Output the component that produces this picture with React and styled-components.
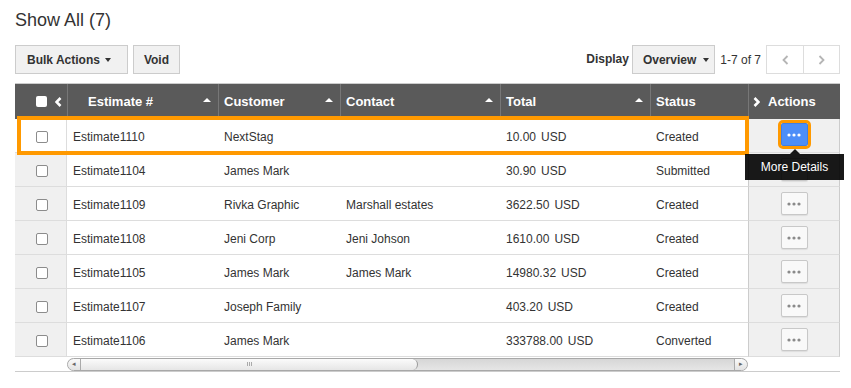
import React from 'react';
import styled, { createGlobalStyle, css } from 'styled-components';

const COLS = '52px 151px 122px 160px 150px 98px 92px';

const rows = [
  { id: 'Estimate1110', customer: 'NextStag', contact: '', amount: '10.00', status: 'Created', selected: true },
  { id: 'Estimate1104', customer: 'James Mark', contact: '', amount: '30.90', status: 'Submitted' },
  { id: 'Estimate1109', customer: 'Rivka Graphic', contact: 'Marshall estates', amount: '3622.50', status: 'Created' },
  { id: 'Estimate1108', customer: 'Jeni Corp', contact: 'Jeni Johson', amount: '1610.00', status: 'Created' },
  { id: 'Estimate1105', customer: 'James Mark', contact: 'James Mark', amount: '14980.32', status: 'Created' },
  { id: 'Estimate1107', customer: 'Joseph Family', contact: '', amount: '403.20', status: 'Created' },
  { id: 'Estimate1106', customer: 'James Mark', contact: '', amount: '333788.00', status: 'Converted' },
];

const Chevron = ({ dir = 'left', color = '#fff', w = 2.6 }) => (
  <svg width="7" height="10" viewBox="0 0 7 10">
    <polyline
      points={dir === 'left' ? '5.5,1 1.5,5 5.5,9' : '1.5,1 5.5,5 1.5,9'}
      fill="none"
      stroke={color}
      strokeWidth={w}
    />
  </svg>
);

const Dots = ({ color }) => (
  <svg width="14" height="4" viewBox="0 0 14 4">
    <circle cx="2" cy="2" r="1.6" fill={color} />
    <circle cx="7" cy="2" r="1.6" fill={color} />
    <circle cx="12" cy="2" r="1.6" fill={color} />
  </svg>
);

const App = () => {
  return (
    <Page>
      <GlobalStyle />
      <Title>Show All (7)</Title>

      <Toolbar>
        <Group>
          <Button $pad="0 16px 0 11px">
            Bulk Actions <Caret />
          </Button>
          <Button $pad="0 10px">Void</Button>
        </Group>
        <Group>
          <Label>Display</Label>
          <Button $pad="0 5px 0 10px" $gap="7px">
            Overview <Caret />
          </Button>
          <Count>1-7 of 7</Count>
          <Pager>
            <PageButton>
              <Chevron dir="left" color="#b5b5b5" w={1.8} />
            </PageButton>
            <PageButton>
              <Chevron dir="right" color="#b5b5b5" w={1.8} />
            </PageButton>
          </Pager>
        </Group>
      </Toolbar>

      <Table>
        <HeaderRow>
          <HeadCell $first $pad="0 0 0 21px" $gap="8px">
            <HeadCheck />
            <Chevron dir="left" />
          </HeadCell>
          <HeadCell $pad="0 0 0 20px">
            Estimate # <SortUp />
          </HeadCell>
          <HeadCell>
            Customer <SortUp />
          </HeadCell>
          <HeadCell>
            Contact <SortUp />
          </HeadCell>
          <HeadCell>
            Total <SortUp />
          </HeadCell>
          <HeadCell>Status</HeadCell>
          <HeadCell $pad="0 0 0 4px" $gap="8px">
            <Chevron dir="right" />
            Actions
          </HeadCell>
        </HeaderRow>

        {rows.map(r => (
          <Row key={r.id} $selected={r.selected}>
            <CheckCell $selected={r.selected}>
              <Check />
            </CheckCell>
            <Cell>{r.id}</Cell>
            <Cell>{r.customer}</Cell>
            <Cell>{r.contact}</Cell>
            <Cell>
              {r.amount}
              <Currency>USD</Currency>
            </Cell>
            <Cell>{r.status}</Cell>
            <ActionCell>
              <MoreButton $active={r.selected}>
                <Dots color={r.selected ? '#fff' : '#8a8a8a'} />
              </MoreButton>
              {r.selected && <Tooltip>More Details</Tooltip>}
            </ActionCell>
          </Row>
        ))}

        <ScrollRow>
          <Scrollbar>
            <ScrollCap>◂</ScrollCap>
            <Thumb>
              <Grip />
            </Thumb>
            <Track />
            <ScrollCap $right>▸</ScrollCap>
          </Scrollbar>
        </ScrollRow>
      </Table>
    </Page>
  );
};
export default App;

const GlobalStyle = createGlobalStyle`
  body {
    margin: 0;
    background: #fff;
    font-family: "Liberation Sans", Arial, sans-serif;
    color: #333;
  }
`;

const Page = styled.div`
  width: 825px;
  padding: 10px 11px 0 15px;
`;

const Title = styled.h1`
  margin: 0;
  font-size: 18px;
  line-height: 20px;
  font-weight: normal;
  color: #333;
`;

const Toolbar = styled.div`
  display: flex;
  justify-content: space-between;
  align-items: center;
  margin-top: 15px;
  height: 29px;
`;

const Group = styled.div`
  display: flex;
  align-items: center;
  gap: 5px;
`;

const Button = styled.div`
  box-sizing: border-box;
  height: 29px;
  display: inline-flex;
  align-items: center;
  gap: ${p => p.$gap || '5px'};
  padding: ${p => p.$pad};
  border: 1px solid #ccc;
  background: #f1f1f1;
  font-size: 12px;
  font-weight: bold;
  color: #333;
  white-space: nowrap;
`;

const Caret = styled.span`
  width: 0;
  height: 0;
  border-left: 3.5px solid transparent;
  border-right: 3.5px solid transparent;
  border-top: 4px solid #333;
`;

const Label = styled.span`
  font-size: 12px;
  font-weight: bold;
  margin-top: -2px;
  margin-right: -2px;
`;

const Count = styled.span`
  font-size: 12px;
  color: #333;
`;

const Pager = styled.div`
  display: flex;
`;

const PageButton = styled.div`
  box-sizing: border-box;
  width: 38px;
  height: 29px;
  display: flex;
  align-items: center;
  justify-content: center;
  background: #fff;
  border: 1px solid #ddd;
  & + & {
    margin-left: -1px;
    width: 37px;
  }
`;

const Table = styled.div`
  margin-top: 9px;
  border-top: 1px solid #ccc;
  border-bottom: 1px solid #ccc;
`;

const HeaderRow = styled.div`
  display: grid;
  grid-template-columns: ${COLS};
  height: 35px;
  background: #5a5a5a;
`;

const HeadCell = styled.div`
  display: flex;
  align-items: center;
  gap: ${p => p.$gap || '0'};
  padding: ${p => p.$pad || '0 0 0 5px'};
  border-left: ${p => (p.$first ? 'none' : '1px solid #777')};
  color: #fff;
  font-size: 13px;
  font-weight: bold;
  white-space: nowrap;
`;

const SortUp = styled.span`
  margin-left: auto;
  margin-right: 7px;
  margin-top: -3px;
  width: 0;
  height: 0;
  border-left: 4px solid transparent;
  border-right: 4px solid transparent;
  border-bottom: 4px solid #fff;
`;

const HeadCheck = styled.span`
  width: 11px;
  height: 11px;
  border-radius: 2px;
  background: #fff;
`;

const Row = styled.div`
  position: relative;
  display: grid;
  grid-template-columns: ${COLS};
  height: 34px;
  ${p =>
    p.$selected &&
    css`
      z-index: 2;
      &::after {
        content: '';
        position: absolute;
        left: 2px;
        right: 91px;
        top: -3px;
        bottom: -2px;
        border: 4px solid #ff9900;
        pointer-events: none;
      }
    `}
`;

const Cell = styled.div`
  display: flex;
  align-items: center;
  box-sizing: border-box;
  padding: 2px 0 0 6px;
  border-bottom: 1px solid #ddd;
  font-size: 12px;
  color: #333;
  white-space: nowrap;
`;

const CheckCell = styled(Cell)`
  padding-left: 21px;
  background: ${p => (p.$selected ? '#fff' : '#f0f0f0')};
  border-right: 1px solid #ddd;
`;

const Check = styled.span`
  box-sizing: border-box;
  width: 12px;
  height: 12px;
  border: 1px solid #8c8c8c;
  border-radius: 2px;
  background: #fff;
`;

const Currency = styled.span`
  margin-left: 5px;
`;

const ActionCell = styled.div`
  position: relative;
  display: flex;
  align-items: center;
  justify-content: center;
  background: #f0f0f0;
  border-left: 1px solid #ccc;
  border-right: 1px solid #ccc;
  border-bottom: 1px solid #ddd;
`;

const MoreButton = styled.div`
  box-sizing: border-box;
  width: 27px;
  height: 23px;
  display: flex;
  align-items: center;
  justify-content: center;
  border-radius: 2px;
  ${p =>
    p.$active
      ? css`
          background: #4d8ef8;
          border: 1px solid #3f7fe6;
          outline: 3px solid #ff9900;
          margin-top: -2px;
        `
      : css`
          background: #f9f9f9;
          border: 1px solid #c8c8c8;
          box-shadow: 0 1px 1px rgba(0, 0, 0, 0.08);
        `}
`;

const Tooltip = styled.div`
  position: absolute;
  z-index: 5;
  left: -4px;
  top: 35px;
  width: 99px;
  height: 26px;
  display: flex;
  align-items: center;
  justify-content: center;
  background: rgba(0, 0, 0, 0.9);
  color: #fff;
  font-size: 12px;
  white-space: nowrap;
  &::before {
    content: '';
    position: absolute;
    top: -5px;
    left: 50%;
    margin-left: -5px;
    border-left: 5px solid transparent;
    border-right: 5px solid transparent;
    border-bottom: 5px solid rgba(0, 0, 0, 0.9);
  }
`;

const ScrollRow = styled.div`
  display: grid;
  grid-template-columns: ${COLS};
  height: 14px;
  align-items: center;
`;

const Scrollbar = styled.div`
  grid-column: 2 / 7;
  display: flex;
  height: 13px;
  box-sizing: border-box;
  border: 1px solid #a8a8a8;
  border-radius: 7px;
  background: linear-gradient(#d6d6d6, #e6e6e6);
  overflow: hidden;
`;

const ScrollCap = styled.div`
  flex: 0 0 12px;
  display: flex;
  align-items: center;
  justify-content: center;
  font-size: 7px;
  color: #666;
  background: linear-gradient(#fafafa, #e2e2e2);
  ${p => (p.$right ? 'border-left: 1px solid #aaa;' : 'border-right: 1px solid #aaa;')}
  border-radius: ${p => (p.$right ? '0 6px 6px 0' : '6px 0 0 6px')};
`;

const Thumb = styled.div`
  flex: 0 0 337px;
  display: flex;
  align-items: center;
  justify-content: center;
  box-sizing: border-box;
  border-right: 1px solid #999;
  border-radius: 0 6px 6px 0;
  background: linear-gradient(#fbfbfb, #e6e6e6);
`;

const Grip = styled.span`
  width: 5px;
  height: 4px;
  background: repeating-linear-gradient(90deg, #aaa 0 1px, transparent 1px 2px);
`;

const Track = styled.div`
  flex: 1;
`;
